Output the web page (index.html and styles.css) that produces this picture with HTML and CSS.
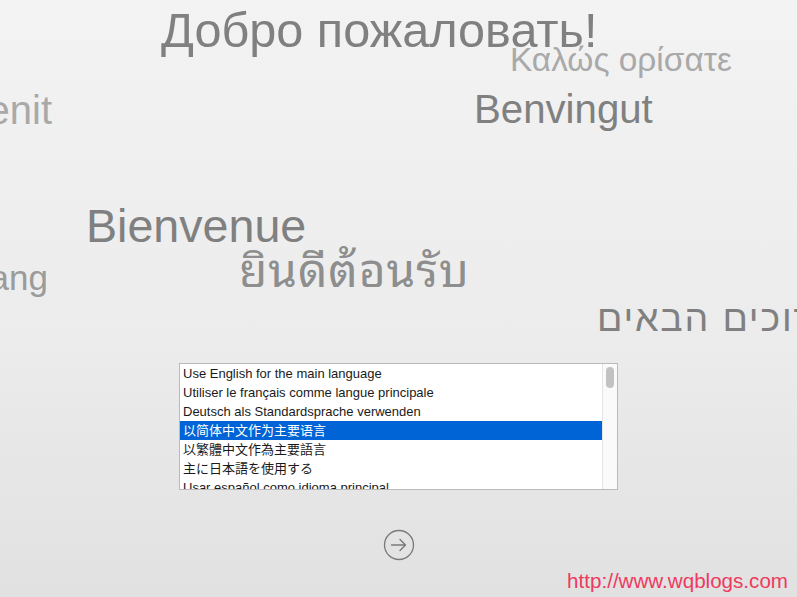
FILE: index.html
```html
<!DOCTYPE html>
<html lang="en">
<head>
<meta charset="utf-8">
<title>Language</title>
<link rel="stylesheet" href="styles.css">
</head>
<body>
<div class="stage">
  <span class="word w-ru">Добро пожаловать!</span>
  <span class="word w-el">Καλώς ορίσατε</span>
  <span class="word w-ca">Benvingut</span>
  <span class="word w-ro">Bun venit</span>
  <span class="word w-fr">Bienvenue</span>
  <span class="word w-th">ยินดีต้อนรับ</span>
  <span class="word w-id">Selamat datang</span>
  <span class="word w-he" dir="rtl">ברוכים הבאים</span>

  <main class="content">
    <div class="listbox">
      <ul class="rows">
        <li class="row">Use English for the main language</li>
        <li class="row">Utiliser le français comme langue principale</li>
        <li class="row">Deutsch als Standardsprache verwenden</li>
        <li class="row row-sel sc">以简体中文作为主要语言</li>
        <li class="row tc">以繁體中文作為主要語言</li>
        <li class="row jp">主に日本語を使用する</li>
        <li class="row">Usar español como idioma principal</li>
      </ul>
      <div class="scrollbar"><div class="thumb"></div></div>
    </div>
    <button class="next" type="button" aria-label="Continue">
      <svg width="32" height="32" viewBox="0 0 32 32">
        <circle cx="16" cy="16" r="14.5" fill="none" stroke="#7a7a7a" stroke-width="1.3"/>
        <path d="M8.5 16 H22.5 M17 10.5 L22.5 16 L17 21.5" fill="none" stroke="#7a7a7a" stroke-width="1.4" stroke-linecap="round" stroke-linejoin="round"/>
      </svg>
    </button>
  </main>

  <span class="watermark">http://www.wqblogs.com</span>
</div>
</body>
</html>
```
FILE: styles.css
```css
html, body {
  margin: 0;
  padding: 0;
}
body {
  font-family: "Liberation Sans", Arial, sans-serif;
}
.stage {
  position: relative;
  width: 797px;
  height: 597px;
  overflow: hidden;
  background: linear-gradient(to bottom, #f3f3f3 0%, #ececec 55%, #e1e1e1 100%);
}
.word {
  position: absolute;
  white-space: nowrap;
  line-height: 1;
  color: #808080;
  font-family: "Liberation Sans", Arial, sans-serif;
}
.w-ru { left: 161px; top: 6px; font-size: 48.6px; }
.w-el { left: 510px; top: 43px; font-size: 33.4px; color: #a9a9a9; }
.w-ca { left: 474px; top: 90px; font-size: 40.2px; }
.w-ro { right: 745px; top: 90px; font-size: 40px; color: #a9a9a9; }
.w-fr { left: 86px; top: 203px; font-size: 46.6px; }
.w-th { left: 239px; top: 243px; font-size: 46px; letter-spacing: 1px; color: #8e8e8e; font-family: "Noto Sans Thai Looped", "Noto Sans Thai", "Noto Sans", "DejaVu Sans", sans-serif; }
.w-id { right: 749px; top: 260px; font-size: 35px; color: #9b9b9b; }
.w-he { left: 597px; top: 300px; font-size: 37.5px; letter-spacing: 1.8px; direction: rtl; }

.content {
  display: flex;
  flex-direction: column;
  align-items: center;
  padding-top: 363px;
}
.listbox {
  display: flex;
  width: 437px;
  height: 125px;
  border: 1px solid #bababa;
  background: #ffffff;
  overflow: hidden;
}
.rows {
  list-style: none;
  margin: 0;
  padding: 0;
  width: 422px;
  flex: none;
}
.row {
  height: 19px;
  line-height: 19px;
  padding-left: 3px;
  font-size: 13px;
  color: #1a1a1a;
  white-space: nowrap;
  font-family: "Liberation Sans", Arial, sans-serif;
}
.row.sc { font-family: "Liberation Sans", "Noto Sans CJK SC", sans-serif; }
.row.tc { font-family: "Liberation Sans", "Noto Sans CJK TC", sans-serif; }
.row.jp { font-family: "Liberation Sans", "Noto Sans CJK JP", sans-serif; }
.row-sel {
  background: #0064d6;
  color: #ffffff;
}
.scrollbar {
  flex: 1;
  border-left: 1px solid #e4e4e4;
  background: #fafafa;
  padding: 3px 0 0 3px;
}
.thumb {
  width: 8px;
  height: 21px;
  border-radius: 4px;
  background: #c2c2c2;
}
.next {
  margin-top: 39px;
  padding: 0;
  border: 0;
  background: none;
  width: 32px;
  height: 32px;
  display: block;
}
.next svg { display: block; }
.watermark {
  position: absolute;
  right: 9px;
  top: 571px;
  font-size: 20.6px;
  line-height: 1;
  color: #ee3a5e;
  font-family: "Liberation Sans", Arial, sans-serif;
}
```
